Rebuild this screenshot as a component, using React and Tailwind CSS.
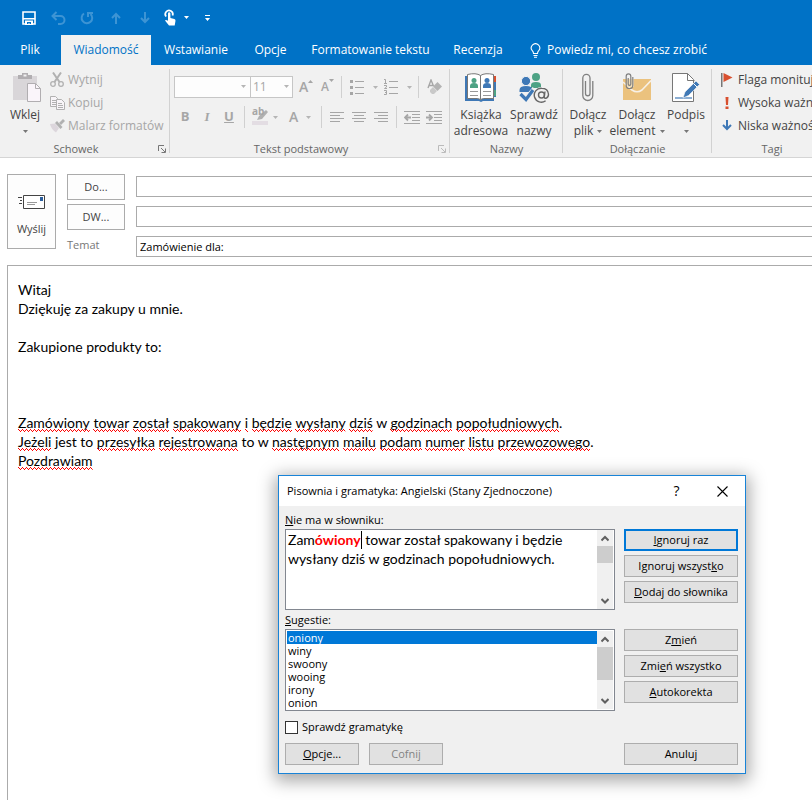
import React from 'react';
import { useState } from 'react';

const Caret = ({ className = 'text-[#777777]' }) => (
    <svg width="5" height="3" viewBox="0 0 5 3" className={`shrink-0 ${className}`} aria-hidden="true">
        <path d="M0 0h5L2.5 3z" fill="currentColor" />
    </svg>
);

const Divider = () => <span className="w-px h-[22px] bg-[#d0d0d0] shrink-0"></span>;

/* Quick access bar */
const QuickAccess = () => (
    <div className="flex items-center h-[35px] pl-[22px] text-white">
        <button type="button" aria-label="Zapisz" className="w-[29px]">
            <svg width="14" height="14" viewBox="0 0 14 14" aria-hidden="true">
                <path d="M1 1h12v12H1z" fill="none" stroke="#fff" strokeWidth="1.600" />
                <path d="M1 7h12v1.500H1zM3 9.500h8V14H3z" fill="#fff" />
                <path d="M5 11h4v2H7.500v-1H6.500v1H5z" fill="#0072c6" />
            </svg>
        </button>
        <button type="button" aria-label="Cofnij pisanie" className="w-[29px]">
            <svg width="15" height="14" viewBox="0 0 15 14" fill="none" stroke="#3d94d4" strokeWidth="2" aria-hidden="true">
                <path d="M5.500 1L1.500 5l4 4M2 5h7.500a4 4 0 0 1 0 8H7" />
            </svg>
        </button>
        <button type="button" aria-label="Powtórz" className="w-[31px]">
            <svg width="14" height="14" viewBox="0 0 14 14" fill="none" stroke="#3d94d4" strokeWidth="2" aria-hidden="true">
                <path d="M4 2.500A5.300 5.300 0 1 0 10.500 3" />
                <path d="M8 6V2h5" />
            </svg>
        </button>
        <button type="button" aria-label="Poprzedni element" className="w-[29px]">
            <svg width="10" height="12" viewBox="0 0 10 12" fill="none" stroke="#3d94d4" strokeWidth="2" aria-hidden="true">
                <path d="M5 12V2M1 6l4-4 4 4" />
            </svg>
        </button>
        <button type="button" aria-label="Następny element" className="w-6">
            <svg width="10" height="12" viewBox="0 0 10 12" fill="none" stroke="#3d94d4" strokeWidth="2" aria-hidden="true">
                <path d="M5 0v10M1 6l4 4 4-4" />
            </svg>
        </button>
        <button type="button" aria-label="Tryb dotyku" className="flex items-center gap-2 mr-4">
            <svg width="12" height="17" viewBox="0 0 12 17" aria-hidden="true">
                <path d="M2.200 7.500A3.700 3.700 0 1 1 8.500 6.500" fill="none" stroke="#fff" strokeWidth="1.800" />
                <path d="M4 4.500a1.200 1.200 0 0 1 2.400 0V9l4 1q1.300.4 1.100 1.800L10.700 16.500H5L1 11.600q.6-1.500 3 .2z" fill="#fff" />
            </svg>
            <Caret className="text-white" />
        </button>
        <button type="button" aria-label="Dostosuj pasek">
            <svg width="5" height="6" viewBox="0 0 5 6" aria-hidden="true">
                <path d="M0 0h5v1H0zM0 3h5L2.500 6z" fill="#fff" />
            </svg>
        </button>
    </div>
);

const tabs = [
    { name: 'Plik', style: 'w-[60px] mr-px text-white' },
    { name: 'Wiadomość', style: 'w-[90px] bg-[#f1f1f1] text-[#0072c6]' },
    { name: 'Wstawianie', style: 'w-[90px] text-white' },
    { name: 'Opcje', style: 'w-[59px] text-white' },
    { name: 'Formatowanie tekstu', style: 'w-[141px] text-white' },
    { name: 'Recenzja', style: 'w-[74px] text-white' },
];

const Tabs = () => (
    <nav className="flex h-[30px] text-xs">
        {tabs.map((tab) => (
            <button key={tab.name} type="button" className={`shrink-0 whitespace-nowrap ${tab.style}`}>
                {tab.name}
            </button>
        ))}
        <button type="button" className="flex items-center gap-[6px] ml-[15px] text-white whitespace-nowrap">
            <svg width="11" height="15" viewBox="0 0 11 15" fill="none" stroke="#fff" strokeWidth="1.100" aria-hidden="true">
                <path d="M3.500 10.500Q3.500 9 2.300 7.700A4.200 4.200 0 1 1 8.700 7.700Q7.500 9 7.500 10.500zM3.500 12.500h4M4 14.300h3" />
            </svg>
            Powiedz mi, co chcesz zrobić
        </button>
    </nav>
);

const Launcher = ({ className }) => (
    <button type="button" aria-label="Więcej opcji" className="absolute right-1 bottom-1">
        <svg width="8" height="8" viewBox="0 0 8 8" fill="none" stroke="currentColor" className={className} aria-hidden="true">
            <path d="M.5 6V.5H6M3 3l4 4M7.500 3.500v4h-4" />
        </svg>
    </button>
);

const Group = ({ label, width, launcher, children }) => (
    <section className={`relative flex flex-col shrink-0 pt-[3px] ${width}`}>
        <div className="flex flex-col h-[73px]">{children}</div>
        <h2 className={`h-4 leading-4 text-center text-[#666666] whitespace-nowrap text-[11px] ${launcher ? 'pr-[18px]' : ''}`}>{label}</h2>
        <span className="absolute right-0 top-1 bottom-1 w-px bg-[#d2d2d2]"></span>
        {launcher && <Launcher className={launcher} />}
    </section>
);

const SmallButton = ({ icon, color, children }) => (
    <button type="button" className={`flex items-center gap-1 h-[23px] whitespace-nowrap ${color}`}>
        <span className="flex justify-center shrink-0 w-[14px]">{icon}</span>
        {children}
    </button>
);

const BigButton = ({ icon, lines, caret, width }) => (
    <button type="button" className={`flex flex-col items-center shrink-0 leading-4 text-[#444444] whitespace-nowrap ${width}`}>
        <span className="flex items-center justify-center h-[39px]">{icon}</span>
        <span>{lines[0]}</span>
        <span className="flex items-center gap-1 h-4">
            {lines[1]}
            {caret && <Caret />}
        </span>
    </button>
);

const PasteIcon = () => (
    <svg width="29" height="31" viewBox="0 0 29 31" aria-hidden="true">
        <path d="M0 4h24v24H0z" fill="#d9d6d9" />
        <path d="M5 3h4V1h6v2h4v4H5z" fill="#b1aeb1" />
        <path d="M10.500 2.500h3v2h-3z" fill="#f1f1f1" />
        <path d="M14.500 11.500h8l5 5v13h-13z" fill="#faf5fa" stroke="#b1aeb1" />
        <path d="M22.500 11.500v5h5" fill="none" stroke="#b1aeb1" />
    </svg>
);

const CutIcon = () => (
    <svg width="14" height="15" viewBox="0 0 14 15" fill="none" stroke="#b1b1b1" aria-hidden="true">
        <path d="M3 .5l6.500 9.500M11 .5L4.500 10" strokeWidth="2" />
        <circle cx="3" cy="12" r="2.300" strokeWidth="1.300" />
        <circle cx="11" cy="12" r="2.300" strokeWidth="1.300" />
    </svg>
);

const CopyIcon = () => (
    <svg width="15" height="14" viewBox="0 0 15 14" fill="#f8f5f8" stroke="#b1b1b1" className="shrink-0" aria-hidden="true">
        <path d="M.5.500h5l2 2v8h-7z" />
        <path d="M2 4.500h4M2 6.500h4M2 8.500h4" />
        <path d="M6.500 3.500h5l3 3v7h-8z" />
        <path d="M8 7.500h4M8 9.500h5M8 11.500h5" />
    </svg>
);

const BrushIcon = () => (
    <svg width="15" height="14" viewBox="0 0 15 14" className="shrink-0" aria-hidden="true">
        <path d="M0 5l5-.5L9 9l-3 4.500Q1 10 0 5z" fill="#dcd6dc" />
        <path d="M5 4l2-2 5.500 6-2 2z" fill="#b1b1b1" />
        <path d="M9 4l4-4 2 2-4 4z" fill="#b1b1b1" />
    </svg>
);

const BookIcon = () => (
    <svg width="32" height="29" viewBox="0 0 32 29" aria-hidden="true">
        <path d="M0 3h31v25H18l-2 1-2-1H0z" fill="#3e78b6" />
        <path d="M29 3h2v6h-2z" fill="#d8502f" />
        <path d="M29 10h2v6h-2z" fill="#3e78b6" />
        <path d="M29 17h2v6h-2z" fill="#4da284" />
        <path d="M29 24h2v4h-2z" fill="#f1f1f1" />
        <path d="M2.500 1.500Q11-.5 15.500 2.500q4.500-3 13-1v24h-10l-3 1-3-1h-10z" fill="#fff" stroke="#777" />
        <path d="M15.500 2.500v24" stroke="#777" />
        <circle cx="9" cy="7.500" r="2.500" fill="#4da284" />
        <path d="M5 15v-2q0-3 4-3t4 3v2z" fill="#4da284" />
        <circle cx="22" cy="7.500" r="2.500" fill="#3e78b6" />
        <path d="M18 15v-2q0-3 4-3t4 3v2z" fill="#3e78b6" />
        <path d="M5 18.500h8M5 22.500h8M18 18.500h8M18 22.500h8" stroke="#999" />
    </svg>
);

const CheckNamesIcon = () => (
    <svg width="31" height="30" viewBox="0 0 31 30" aria-hidden="true">
        <circle cx="17" cy="4" r="4" fill="#4da284" />
        <path d="M12 15v-3q0-3 5-3t5 3v3z" fill="#4da284" />
        <circle cx="7" cy="8" r="4.600" fill="#3e78b6" stroke="#f1f1f1" />
        <path d="M.5 19v-2q0-4 6.500-4t6.500 4v2z" fill="#3e78b6" />
        <path d="M1 21l6 6 9-11" fill="none" stroke="#f1f1f1" strokeWidth="6" />
        <path d="M1.500 21l5.500 5.500L14 17" fill="none" stroke="#3e78b6" strokeWidth="3.200" />
        <circle cx="22.500" cy="22" r="8" fill="#f1f1f1" />
        <circle cx="22.500" cy="22" r="3" fill="none" stroke="#666" strokeWidth="1.400" />
        <path d="M26 18.500l-.8 5q0 2 1.800 1.800 2.500-.8 2.500-4Q29 15.200 22.600 15.200a7 7 0 1 0 4 12.500" fill="none" stroke="#666" strokeWidth="1.400" />
    </svg>
);

const ClipIcon = () => (
    <svg width="12" height="29" viewBox="0 0 12 29" fill="none" stroke="#808080" strokeWidth="1.300" aria-hidden="true">
        <path d="M3.500 8v12.500a2 2 0 0 0 4.500 0V5A3.600 3.600 0 0 0 .8 5v17.500a5 5 0 0 0 10 0V8" />
    </svg>
);

const EnvelopeIcon = () => (
    <svg width="28" height="29" viewBox="0 0 28 29" aria-hidden="true">
        <path d="M0 6h28v21H0z" fill="#ebc27e" />
        <path d="M0 9l9 8q5 3.500 10 0l9-9.500" fill="none" stroke="#f7f0e6" strokeWidth="1.600" />
        <path d="M3 6h8v8H3z" fill="#f1ddb8" />
        <path d="M5.200 5v6a1.200 1.200 0 0 0 2.600 0V3.200a2.200 2.200 0 0 0-4.600 0v9a3.200 3.200 0 0 0 6.600 0V4" fill="none" stroke="#808080" strokeWidth="1.200" />
    </svg>
);

const SignIcon = () => (
    <svg width="28" height="30" viewBox="0 0 28 30" aria-hidden="true">
        <path d="M.5.500h15l6 6v22H.5z" fill="#fff" stroke="#777" />
        <path d="M15.500.500v7h7" fill="none" stroke="#777" />
        <path d="M3 25h17" stroke="#3e78b6" strokeWidth="1.200" />
        <path d="M11 25l2-6L24 8l3.500 3.500-11 11z" fill="#3e78b6" stroke="#f7f7f7" strokeWidth=".6" />
        <path d="M21.500 10.500L25 14" stroke="#fff" />
    </svg>
);

const ClipboardGroup = () => (
    <Group label="Schowek" width="w-[170px]" launcher="text-[#777777]">
        <div className="flex pl-[5px]">
            <button type="button" className="flex flex-col items-center w-[40px] leading-4 text-[#444444]">
                <span className="flex items-center justify-center h-[39px] pl-1"><PasteIcon /></span>
                <span>Wklej</span>
                <span className="flex items-center h-4"><Caret /></span>
            </button>
            <div className="flex flex-col pl-[5px]">
                <SmallButton color="text-[#a6a6a6]" icon={<CutIcon />}>Wytnij</SmallButton>
                <SmallButton color="text-[#a6a6a6]" icon={<CopyIcon />}>Kopiuj</SmallButton>
                <SmallButton color="text-[#a6a6a6]" icon={<BrushIcon />}>Malarz formatów</SmallButton>
            </div>
        </div>
    </Group>
);

const GreyCaret = () => <Caret className="text-[#b5b5b5]" />;

const AlignIcon = ({ d }) => (
    <svg width="14" height="11" viewBox="0 0 14 11" stroke="#a6a6a6" aria-hidden="true">
        <path d={d} />
    </svg>
);

const IndentIcon = ({ arrow }) => (
    <svg width="16" height="13" viewBox="0 0 16 13" fill="none" stroke="#a6a6a6" aria-hidden="true">
        <path d="M0 .5h16M8 3.500h8M8 6.500h8M8 9.500h8M0 12.500h16" />
        <path d={arrow} strokeWidth="1.800" />
    </svg>
);

const ListIcon = ({ numbered }) => (
    <svg width="15" height="16" viewBox="0 0 15 16" aria-hidden="true">
        {numbered ? (
            <path d="M0 .5h1.500V4M0 4.500h3M0 6.500h2.500v1.500L.5 9.500h2.500M0 11.500h2.500v4H0M1 13.500h1.500" fill="none" stroke="#a6a6a6" />
        ) : (
            <path d="M0 1h3v3H0zM0 7h3v3H0zM0 13h3v3H0z" fill="#a6a6a6" />
        )}
        <path d="M5 2.500h9M5 8.500h9M5 14.500h9" stroke="#a6a6a6" />
    </svg>
);

const TextGroup = () => (
    <Group label="Tekst podstawowy" width="w-[280px]" launcher="text-[#bbbbbb]">
        <div className="flex items-center h-[22px] mt-2 pl-1 text-[#a6a6a6]">
            <div className="relative">
                <select aria-label="Czcionka" className="block appearance-none w-[77px] h-[22px] bg-[#fdfdfd] border border-[#c6c6c6]"></select>
                <span className="absolute right-[5px] top-[9px]"><GreyCaret /></span>
            </div>
            <div className="relative">
                <select aria-label="Rozmiar czcionki" className="block appearance-none w-[42px] h-[22px] pl-[2px] leading-5 bg-[#fdfdfd] border border-l-0 border-[#c6c6c6]">
                    <option>11</option>
                </select>
                <span className="absolute right-1 top-[9px]"><GreyCaret /></span>
            </div>
            <button type="button" aria-label="Zwiększ czcionkę" className="flex w-[22px] ml-[6px] text-sm leading-[22px] font-semibold">
                A<svg width="5" height="3" viewBox="0 0 5 3" className="mt-1" aria-hidden="true"><path d="M0 3h5L2.500 0z" fill="currentColor" /></svg>
            </button>
            <button type="button" aria-label="Zmniejsz czcionkę" className="flex w-5 leading-[24px] font-semibold">
                A<Caret className="mt-1" />
            </button>
            <Divider />
            <button type="button" aria-label="Punktory" className="flex items-center gap-2 w-[34px] ml-2"><ListIcon /><GreyCaret /></button>
            <button type="button" aria-label="Numerowanie" className="flex items-center gap-2 w-[34px]"><ListIcon numbered /><GreyCaret /></button>
            <Divider />
            <button type="button" aria-label="Wyczyść formatowanie" className="ml-2">
                <svg width="15" height="16" viewBox="0 0 15 16" aria-hidden="true">
                    <path d="M1 9l3-8 2.500 6M2 6.500h4" fill="none" stroke="#a6a6a6" strokeWidth="1.400" />
                    <path d="M3 11l3-3 4 4-3 3H5l-2-2z" fill="#c9c9c9" />
                    <path d="M6 7.500L10.500 3 15 7.500 10.500 12z" fill="#b3b3b3" />
                </svg>
            </button>
        </div>
        <div className="flex items-center h-[22px] mt-2 pl-1 text-[#a6a6a6]">
            <button type="button" className="w-[22px] text-[13px] font-bold">B</button>
            <button type="button" className="w-[22px] text-[13px] italic font-[Liberation_Serif,serif] font-bold">I</button>
            <button type="button" className="w-[22px] text-[13px] font-bold underline">U</button>
            <span className="w-1"></span>
            <Divider />
            <button type="button" aria-label="Kolor wyróżnienia" className="relative flex items-center gap-[5px] w-[37px] ml-[7px]">
                <span className="absolute left-0 -top-1 text-[10px] leading-[14px] font-bold">ab</span>
                <svg width="16" height="18" viewBox="0 0 16 18" aria-hidden="true">
                    <path d="M5 12l2-4 7-6 2 2-6 7z" fill="#b1b1b1" />
                    <path d="M0 13h16v4H0z" fill="#e3dde3" />
                </svg>
                <GreyCaret />
            </button>
            <button type="button" aria-label="Kolor czcionki" className="flex items-center gap-2 w-[32px] text-sm leading-[22px] font-semibold">
                A<GreyCaret />
            </button>
            <Divider />
            <button type="button" aria-label="Do lewej" className="w-[22px] ml-2"><AlignIcon d="M0 .5h14M0 3.500h10M0 6.500h14M0 9.500h10" /></button>
            <button type="button" aria-label="Do środka" className="w-[22px]"><AlignIcon d="M0 .5h14M2 3.500h10M0 6.500h14M2 9.500h10" /></button>
            <button type="button" aria-label="Do prawej" className="w-[22px]"><AlignIcon d="M0 .5h14M4 3.500h10M0 6.500h14M4 9.500h10" /></button>
            <Divider />
            <button type="button" aria-label="Zmniejsz wcięcie" className="w-[22px] ml-[7px]"><IndentIcon arrow="M7 6.500H1.500M4 3.500l-3 3 3 3" /></button>
            <button type="button" aria-label="Zwiększ wcięcie"><IndentIcon arrow="M0 6.500h5.500M3 3.500l3 3-3 3" /></button>
        </div>
    </Group>
);

const Ribbon = () => (
    <div className="flex h-[93px] overflow-hidden bg-[#f1f1f1] border-b border-[#d5d5d5] text-xs">
        <ClipboardGroup />
        <TextGroup />
        <Group label="Nazwy" width="w-[113px]">
            <div className="flex pl-1">
                <BigButton width="w-[54px]" icon={<BookIcon />} lines={['Książka', 'adresowa']} />
                <BigButton width="w-[52px]" icon={<CheckNamesIcon />} lines={['Sprawdź', 'nazwy']} />
            </div>
        </Group>
        <Group label="Dołączanie" width="w-[149px]">
            <div className="flex pl-[3px]">
                <BigButton width="w-[44px]" icon={<ClipIcon />} lines={['Dołącz', 'plik']} caret />
                <BigButton width="w-[54px]" icon={<EnvelopeIcon />} lines={['Dołącz', 'element']} caret />
                <BigButton width="w-[44px]" icon={<SignIcon />} lines={['Podpis', '']} caret />
            </div>
        </Group>
        <Group label="Tagi" width="w-[120px]">
            <div className="flex flex-col pl-2 text-[#444444]">
                <SmallButton color="" icon={
                    <svg width="12" height="14" viewBox="0 0 12 14" aria-hidden="true">
                        <path d="M0 0h1.500v14H0z" fill="#777" />
                        <path d="M2.500 0l9 4.500-9 4.500z" fill="#d8502f" />
                    </svg>
                }>Flaga monitująca</SmallButton>
                <SmallButton color="" icon={
                    <svg width="4" height="12" viewBox="0 0 4 12" aria-hidden="true">
                        <path d="M.5 0h3L3 8H1zM.5 9.500h3V12h-3z" fill="#d8502f" />
                    </svg>
                }>Wysoka ważność</SmallButton>
                <SmallButton color="" icon={
                    <svg width="10" height="11" viewBox="0 0 10 11" fill="none" stroke="#3e78b6" strokeWidth="2" aria-hidden="true">
                        <path d="M5 0v9M1 5l4 4 4-4" />
                    </svg>
                }>Niska ważność</SmallButton>
            </div>
        </Group>
    </div>
);

const recipientButton = 'w-[58px] h-[26px] border border-[#ababab] bg-[#fdfdfd]';
const headerInput = 'w-full h-[21px] pl-[3px] border border-r-0 border-[#ababab] bg-white text-black outline-none';

const MessageHeader = () => (
    <div className="flex pl-[7px] pt-4 text-[11px] text-[#444444]">
        <button type="button" className="flex flex-col items-center shrink-0 w-[49px] h-[75px] pt-[19px] gap-[11px] border border-[#ababab] bg-[#fdfdfd]">
            <svg width="28" height="16" viewBox="0 0 28 16" aria-hidden="true">
                <path d="M5.500 1.500h21v13h-21z" fill="#fff" stroke="#444" />
                <path d="M0 3.500h4M2 6.500h2M1 9.500h3" stroke="#444" />
                <path d="M9 8.500h10M9 10.500h8" stroke="#999" />
                <path d="M22 3h3v4h-3z" fill="#2b5f9e" />
            </svg>
            <span className="leading-4">Wyślij</span>
        </button>
        <div className="flex flex-col gap-1 shrink-0 pl-[11px]">
            <button type="button" className={recipientButton}>Do...</button>
            <button type="button" className={recipientButton}>DW...</button>
            <label htmlFor="subject" className="leading-[22px] text-[#777777]">Temat</label>
        </div>
        <div className="flex flex-col grow gap-[9px] pl-[11px] pt-[2px]">
            <input type="text" aria-label="Do" className={headerInput} />
            <input type="text" aria-label="DW" className={headerInput} />
            <input id="subject" type="text" defaultValue="Zamówienie dla:" className={headerInput} />
        </div>
    </div>
);

/* Word with a red zigzag along its bottom edge */
const Misspelled = ({ children }) => (
    <span className="relative inline-block">
        {children}
        <svg width="100%" height="3" className="absolute left-0 bottom-0" aria-hidden="true">
            <defs>
                <pattern id="squiggle" width="4" height="3" patternUnits="userSpaceOnUse">
                    <path d="M0 0h1v1H0zM1 1h1v1H1zM2 2h1v1H2zM3 1h1v1H3z" fill="#ff0000" />
                </pattern>
            </defs>
            <rect width="100%" height="3" fill="url(#squiggle)" />
        </svg>
    </span>
);

const MessageBody = () => (
    <div
        role="textbox"
        aria-label="Treść wiadomości"
        className="grow ml-[7px] mt-2 pl-[10px] pt-[14px] border-l border-t border-[#ababab] bg-white text-black font-[Lato,sans-serif] text-sm leading-[19px] whitespace-nowrap"
    >
        <p>Witaj</p>
        <p>Dziękuję za zakupy u mnie.</p>
        <p>&nbsp;</p>
        <p>Zakupione produkty to:</p>
        <p>&nbsp;</p>
        <p>&nbsp;</p>
        <p>&nbsp;</p>
        <p>
            <Misspelled>Zamówiony</Misspelled> <Misspelled>towar</Misspelled> <Misspelled>został</Misspelled> <Misspelled>spakowany</Misspelled> <Misspelled>i</Misspelled> <Misspelled>będzie</Misspelled> <Misspelled>wysłany</Misspelled> <Misspelled>dziś</Misspelled> w <Misspelled>godzinach</Misspelled> <Misspelled>popołudniowych</Misspelled>.
        </p>
        <p>
            <Misspelled>Jeżeli</Misspelled> jest to <Misspelled>przesyłka</Misspelled> <Misspelled>rejestrowana</Misspelled> to w <Misspelled>następnym</Misspelled> <Misspelled>mailu</Misspelled> <Misspelled>podam</Misspelled> <Misspelled>numer</Misspelled> <Misspelled>listu</Misspelled> <Misspelled>przewozowego</Misspelled>.
        </p>
        <p><Misspelled>Pozdrawiam</Misspelled></p>
    </div>
);

const ScrollBar = ({ thumb }) => (
    <div className="flex flex-col items-center shrink-0 w-4 bg-[#f0f0f0]">
        <svg width="8" height="16" viewBox="0 0 8 16" fill="none" stroke="#606060" strokeWidth="2" className="shrink-0" aria-hidden="true">
            <path d="M.5 10.500L4 7l3.500 3.500" />
        </svg>
        <span className={`w-full bg-[#cdcdcd] ${thumb}`}></span>
        <svg width="8" height="16" viewBox="0 0 8 16" fill="none" stroke="#606060" strokeWidth="2" className="shrink-0 mt-auto" aria-hidden="true">
            <path d="M.5 6L4 9.500 7.500 6" />
        </svg>
    </div>
);

const DialogButton = ({ primary, disabled, width = 'w-full', children }) => (
    <button
        type="button"
        disabled={disabled}
        className={`h-[22px] bg-[#e1e1e1] ${width} ${primary ? 'border-2 border-[#0078d7]' : 'border border-[#adadad]'} ${disabled ? 'text-[#838383]' : 'text-black'}`}
    >
        {children}
    </button>
);

const suggestions = ['oniony', 'winy', 'swoony', 'wooing', 'irony', 'onion'];

const SpellingDialog = () => {
    const [selected, setSelected] = useState('oniony');
    const [grammar, setGrammar] = useState(false);

    return (
        <div role="dialog" aria-label="Pisownia i gramatyka" className="absolute left-[278px] top-[475px] w-[468px] border border-[#1883d7] bg-[#f0f0f0] text-[11px] text-black shadow-[0_4px_16px_3px_rgba(0,0,0,0.35)]">
            <div className="flex items-center h-[30px] pl-2 bg-white">
                <h1 className="grow whitespace-nowrap">Pisownia i gramatyka: Angielski (Stany Zjednoczone)</h1>
                <button type="button" aria-label="Pomoc" className="w-[45px] text-sm">?</button>
                <button type="button" aria-label="Zamknij" className="flex items-center justify-center w-[46px]">
                    <svg width="11" height="11" viewBox="0 0 11 11" stroke="#000" strokeWidth="1.100" aria-hidden="true">
                        <path d="M.5.500l10 10M10.500.500l-10 10" />
                    </svg>
                </button>
            </div>

            <div className="pl-[6px] pr-[7px] pt-[6px] pb-2">
                <div className="flex justify-between">
                    <div className="w-[330px]">
                        <div className="h-4 mb-px leading-4"><u>N</u>ie ma w słowniku:</div>
                        <div className="flex h-[81px] pr-px border border-[#828790] bg-white">
                            <div role="textbox" aria-label="Nie ma w słowniku" className="grow pl-[2px] font-[Lato,sans-serif] text-sm leading-[19px]">
                                Zam<b className="pb-px border-r border-black text-[#ff0000]">ówiony</b> towar został spakowany i będzie
                                <br />
                                wysłany dziś w godzinach popołudniowych.
                            </div>
                            <ScrollBar thumb="h-[17px]" />
                        </div>
                    </div>
                    <div className="flex flex-col gap-1 w-[114px] pt-[17px]">
                        <DialogButton primary><u>I</u>gnoruj raz</DialogButton>
                        <DialogButton>Ignoruj wszyst<u>k</u>o</DialogButton>
                        <DialogButton><u>D</u>odaj do słownika</DialogButton>
                    </div>
                </div>

                <div className="flex justify-between mt-[2px]">
                    <div className="w-[330px]">
                        <label htmlFor="suggestions" className="block h-4 mb-px leading-4"><u>S</u>ugestie:</label>
                        <div className="flex h-[82px] p-px border border-[#828790] bg-white">
                            <select
                                id="suggestions"
                                size={6}
                                value={selected}
                                onChange={(e) => setSelected(e.target.value)}
                                className="grow h-[78px] overflow-hidden outline-none [scrollbar-width:none]"
                            >
                                {suggestions.map((word) => (
                                    <option key={word} value={word} className="flex items-center h-[13px] min-h-0 p-0 pl-px checked:bg-[linear-gradient(#0078d7,#0078d7)] checked:text-white">
                                        {word}
                                    </option>
                                ))}
                            </select>
                            <ScrollBar thumb="h-[33px]" />
                        </div>
                    </div>
                    <div className="flex flex-col gap-1 w-[114px] pt-[17px]">
                        <DialogButton>Z<u>m</u>ień</DialogButton>
                        <DialogButton>Zmi<u>e</u>ń wszystko</DialogButton>
                        <DialogButton><u>A</u>utokorekta</DialogButton>
                    </div>
                </div>

                <label className="flex items-center gap-1 h-4 mt-2">
                    <input
                        type="checkbox"
                        checked={grammar}
                        onChange={(e) => setGrammar(e.target.checked)}
                        className="appearance-none w-[13px] h-[13px] border border-[#333333] bg-white checked:bg-[#0078d7]"
                    />
                    <span>Sprawdź <u>g</u>ramatykę</span>
                </label>

                <div className="flex gap-[10px] mt-2">
                    <DialogButton width="w-[74px]"><u>O</u>pcje...</DialogButton>
                    <DialogButton width="w-[74px]" disabled>Cofnij</DialogButton>
                    <DialogButton width="w-[114px] ml-auto">Anuluj</DialogButton>
                </div>
            </div>
        </div>
    );
};

const App = () => {
    return (
        <div className="relative flex flex-col min-h-screen overflow-hidden bg-white font-['Open_Sans','Noto_Sans',sans-serif]">
            <header className="bg-[#0072c6]">
                <QuickAccess />
                <Tabs />
            </header>
            <Ribbon />
            <MessageHeader />
            <MessageBody />
            <SpellingDialog />
        </div>
    );
};

export default App;
